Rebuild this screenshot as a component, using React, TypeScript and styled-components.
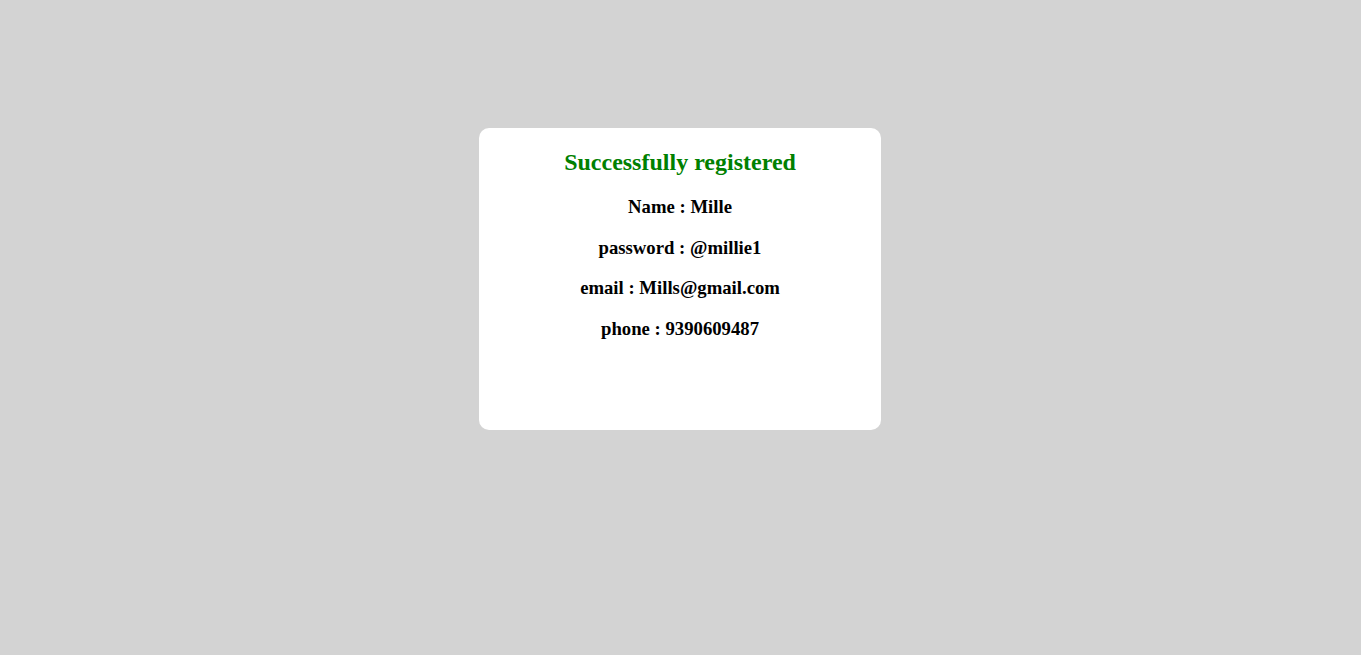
import React from "react";
import styled, { createGlobalStyle } from "styled-components";

const GlobalStyle = createGlobalStyle`
  html, body {
    margin: 0;
    padding: 0;
    background: #d3d3d3;
    font-family: "Liberation Serif", "Times New Roman", serif;
  }
`;

const Page = styled.div`
  min-height: 655px;
  display: flex;
  justify-content: center;
  align-items: flex-start;
  padding: 128px 1px 0 0;
  box-sizing: border-box;
`;

const Card = styled.div`
  width: 402px;
  height: 302px;
  box-sizing: border-box;
  background: #ffffff;
  border-radius: 10px;
  display: flex;
  flex-direction: column;
  align-items: center;
  padding-top: 21px;
`;

const Title = styled.h2`
  margin: 0 0 20px;
  font-size: 24px;
  font-weight: bold;
  color: #008000;
  line-height: normal;
  text-align: center;
`;

const Info = styled.h3`
  margin: 0 0 18.72px;
  font-size: 18.72px;
  font-weight: bold;
  color: #000000;
  line-height: normal;
  text-align: center;
`;

const rows: [string, string][] = [
  ["Name", "Mille"],
  ["password", "@millie1"],
  ["email", "Mills@gmail.com"],
  ["phone", "9390609487"],
];

export default function App() {
  return (
    <>
      <GlobalStyle />
      <Page>
        <Card>
          <Title>Successfully registered</Title>
          {rows.map(([k, v]) => (
            <Info key={k}>
              {k} : {v}
            </Info>
          ))}
        </Card>
      </Page>
    </>
  );
}
